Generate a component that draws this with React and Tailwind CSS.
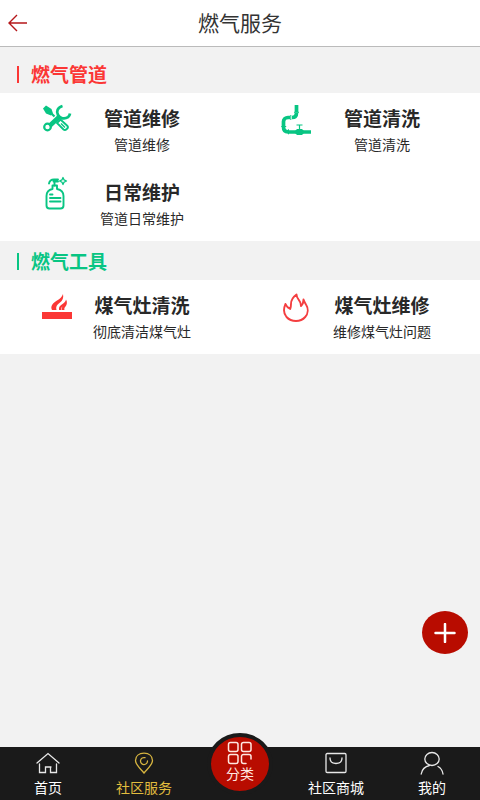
import React from "react";

function BackIcon() {
  return (
    <svg width="20" height="18" viewBox="0 0 20 18" fill="none" stroke="#b5171a" strokeWidth="1.4">
      <path d="M9 1 1 9l8 8M1 9h18" />
    </svg>
  );
}

function ToolsIcon() {
  return (
    <svg width="32" height="32" viewBox="0 0 32 32" fill="none" stroke="#08c583">
      <path d="M2 5.500 5 2.500l5.500 3.500 1.500 4.500-2 2-5-2z" fill="#08c583" stroke="none" />
      <path d="m10 10 3.500 3.500" strokeWidth="2.200" />
      <path d="M8.500 23 18 14" strokeWidth="4.500" />
      <path d="M21.500 3c-5 1.500-6.500 5.500-4.500 9s6.500 4.500 10 2.200c1-.8 1.700-2 2-3.700" strokeWidth="2.800" />
      <circle cx="6.500" cy="24" r="3.300" strokeWidth="2.200" />
      <path d="m19.500 16.500-3.500 3.500 6.500 6.500c2 1.500 5.500-1.500 4-3.500z" strokeWidth="1.900" />
      <path d="m20 20.500 4 4" strokeWidth="1.500" />
    </svg>
  );
}

function PipeIcon() {
  return (
    <svg width="32" height="32" viewBox="0 0 32 32" fill="none" stroke="#08c583">
      <path d="M15.500 2v7M15.500 9.800c0 3-1.500 4.700-4.500 4.700M9 14.500H7C4.500 14.500 2.500 16 2.500 18.500V23M2.500 24c0 3 1.800 4.800 4.500 4.800M8 29h22" strokeWidth="3.700" />
      <path d="M13 9.300h5M9.800 12v5M.2 23.500h5M7.500 26.300v5" strokeWidth="1" />
      <path d="M13 29 16 26h5l3 3-3 3h-5z" fill="#08c583" stroke="none" />
      <path d="M18.500 22v5M15.500 22h6" strokeWidth="1.200" />
    </svg>
  );
}

function BottleIcon() {
  return (
    <svg width="32" height="34" viewBox="0 0 32 34" fill="none" stroke="#08c583" strokeWidth="1.900" strokeLinecap="round" strokeLinejoin="round">
      <path d="M11.500 9.500H16V13c3.800.8 6.500 3.500 6.500 7v9.500c0 2-1 3-3 3H8.500c-2 0-3-1-3-3V20c0-3.500 2.500-6.200 6-7z" />
      <path d="M13.500 9.500V5.500M8 7.500c.5-2.500 2.500-4 5-4h4M12.500 5.500H17M9 18.500h2.500M9 22h10.500M9 25.500h10.500" />
      <path d="m22 1.500 1.100 2.400 2.400 1.100-2.400 1.100L22 8.500l-1.100-2.400L18.500 5l2.400-1.100z" strokeWidth="1.300" />
    </svg>
  );
}

function StoveIcon() {
  return (
    <svg width="32" height="32" viewBox="0 -2 32 32" fill="#fb3735">
      <path d="M1 20h30v7H1z" />
      <path d="M11 18c-2-4 1-7 5-9.500 3-1.800 5-3.500 6-6.500.8 4-.5 6.500-3 8.500-2.500 2.200-4.500 3.500-3.500 7.500zM18 18c-.5-3 1-4.500 3.500-6 2-1.200 3-2.500 3.500-4.500 1.500 2.500 1 5-.5 7-1 1.200-1.500 2-1 3.500H21c-.5-1.500 0-2.500.5-3.500-1.200 1-1.500 2-1 3.500z" />
    </svg>
  );
}

function FlameIcon() {
  return (
    <svg width="28" height="32" viewBox="0 0 28 32" fill="none" stroke="#f43e40" strokeWidth="1.900" strokeLinejoin="round">
      <path d="M2.500 14C.3 19 .5 23.500 3.500 27c2.300 2.500 5.800 4 9.500 4s7-1.500 9.200-4c3-3.500 3.300-8.500.8-12.500-1-1.700-2.200-3.500-2.500-5 0 3-.8 5-2.500 6.500-.2-3-1-5-2.500-6.700C14.300 7.800 13.500 6.500 13.500 4.500c-3.500 2.500-5.500 6-5.500 9.500 0 2-.3 3.500-.8 5C5 18 3.500 16.500 2.500 14z" />
    </svg>
  );
}

function HomeIcon() {
  return (
    <svg width="24" height="22" viewBox="0 0 24 22" fill="none" stroke="#e8e8e8" strokeWidth="1.300" strokeLinecap="round">
      <path d="M1 11 12 1.500 23 11M3.500 12v8.500h6V15H15M14.500 15v5.500h6V12" />
    </svg>
  );
}

function PinIcon() {
  return (
    <svg width="20" height="22" viewBox="0 0 20 22" fill="none" stroke="#d6b440" strokeWidth="1.300" strokeLinecap="round">
      <path d="M10 21C7 17 1.500 13 1.500 8.500 1.500 4 5 1.200 10 1.200s8.500 2.800 8.500 7.300C18.500 13 13 17 10 21z" />
      <path d="M13.500 9a3.500 3.500 0 1 1-2.500-3.300" />
    </svg>
  );
}

function BagIcon() {
  return (
    <svg width="22" height="22" viewBox="0 0 22 22" fill="none" stroke="#e8e8e8" strokeWidth="1.300" strokeLinecap="round">
      <rect x="1" y="1.500" width="20" height="19" rx="1.200" />
      <path d="M5 6c0 3.500 2.500 5.500 6 5.500S17 9.500 17 6" />
    </svg>
  );
}

function PersonIcon() {
  return (
    <svg width="24" height="24" viewBox="0 0 24 24" fill="none" stroke="#e8e8e8" strokeWidth="1.300" strokeLinecap="round">
      <ellipse cx="12" cy="8" rx="7.200" ry="6.500" />
      <path d="M9.500 14.500C4.500 15.500 2 18.500 1.200 23M18 15.500c3 1.500 4.500 4 5 7.500" />
    </svg>
  );
}

function CategoryIcon() {
  return (
    <svg width="26" height="24" viewBox="0 0 26 24" fill="none" stroke="#ffe7e0" strokeWidth="1.500" strokeLinecap="round">
      <rect x="1.500" y="1.500" width="9.500" height="9" rx="2" />
      <rect x="14.500" y="1.500" width="9.500" height="9" rx="2" />
      <rect x="1.500" y="13.500" width="9.500" height="9" rx="2" />
      <path d="M24 18v-2.500c0-1.200-.8-2-2-2h-5.500c-1.200 0-2 .8-2 2v5c0 1.200.8 2 2 2H19" />
    </svg>
  );
}

const pipes = [
  { title: "管道维修", text: "管道维修", Icon: ToolsIcon },
  { title: "管道清洗", text: "管道清洗", Icon: PipeIcon },
  { title: "日常维护", text: "管道日常维护", Icon: BottleIcon },
];

const appliances = [
  { title: "煤气灶清洗", text: "彻底清洁煤气灶", Icon: StoveIcon },
  { title: "煤气灶维修", text: "维修煤气灶问题", Icon: FlameIcon },
];

function Section({ title, color, items }) {
  return (
    <section>
      <h2 className={`flex h-[39px] items-center gap-3 pt-0.5 pl-[17px] text-[19px] font-bold ${color}`}>
        <span className="h-[17px] w-[2px] bg-current" />
        {title}
      </h2>
      <div className="grid grid-cols-2 bg-white">
        {items.map(({ title: name, text, Icon }) => (
          <a key={name} href="#" className="flex h-[74px] pt-[9px] pl-[38px]">
            <span className="flex h-[34px] w-[38px] shrink-0 items-center justify-center">
              <Icon />
            </span>
            <span className="flex w-[132px] flex-col items-center text-[#282828]">
              <strong className="text-[19px] leading-8 font-bold">{name}</strong>
              <span className="text-sm whitespace-nowrap">{text}</span>
            </span>
          </a>
        ))}
      </div>
    </section>
  );
}

function NavItem({ label, Icon, active }) {
  return (
    <a href="#" className={`flex flex-1 flex-col items-center pt-1 text-sm ${active ? "text-[#e2bd3e]" : "text-white"}`}>
      <span className="flex h-6 items-center">
        <Icon />
      </span>
      <span className="leading-6">{label}</span>
    </a>
  );
}

export default function App() {
  return (
    <div className="flex min-h-screen flex-col bg-[#f2f2f2] font-['Noto_Sans_CJK_SC',sans-serif]">
      <header className="grid h-[47px] grid-cols-[1fr_auto_1fr] items-center border-b border-[#bbbbbb] bg-white px-2">
        <button type="button" aria-label="返回" className="justify-self-start">
          <BackIcon />
        </button>
        <h1 className="text-[21px] text-[#333333]">燃气服务</h1>
      </header>
      <main className="flex-1 pt-[7px]">
        <Section title="燃气管道" color="text-[#fb3735]" items={pipes} />
        <Section title="燃气工具" color="text-[#08c583]" items={appliances} />
      </main>
      <button
        type="button"
        aria-label="添加"
        className="fixed right-3 bottom-[146px] flex h-[43px] w-[46px] items-center justify-center rounded-[50%] bg-[#b80c00]"
      >
        <svg width="22" height="20" viewBox="0 0 22 20" stroke="#ffffff" strokeWidth="2.500" strokeLinecap="round">
          <path d="M11 1v18M1.500 10h19" />
        </svg>
      </button>
      <nav className="sticky bottom-0 flex h-[53px] bg-[#1a1a1a]">
        <NavItem label="首页" Icon={HomeIcon} />
        <NavItem label="社区服务" Icon={PinIcon} active />
        <a href="#" className="flex flex-1 justify-center text-sm text-[#ffe7e0]">
          <span className="-mt-[14px] flex h-[62px] w-[66px] shrink-0 flex-col items-center rounded-[50%] border-4 border-[#1a1a1a] bg-[#b80c00] pt-1">
            <CategoryIcon />
            <span className="leading-4">分类</span>
          </span>
        </a>
        <NavItem label="社区商城" Icon={BagIcon} />
        <NavItem label="我的" Icon={PersonIcon} />
      </nav>
    </div>
  );
}
